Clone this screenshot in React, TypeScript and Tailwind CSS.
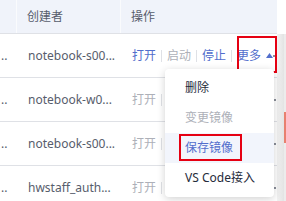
import React from "react";

// rows of the instance table
const rows = [
  { name: "notebook-s00...", active: true },
  { name: "notebook-w0...", active: false },
  { name: "notebook-s00...", active: false },
  { name: "hwstaff_auth...", active: false },
];

const Sep = () => <span className="mx-[5px] inline-block h-[12px] w-px shrink-0 bg-[#dfe1e6]" />;

const Dots = () => (
  <div className="ml-auto mr-[1px] flex shrink-0 gap-px">
    <span className="h-[2px] w-[2px] bg-[#8a8e99]" />
    <span className="h-[2px] w-[2px] bg-[#8a8e99]" />
  </div>
);

function Row({ name, active }: { name: string; active: boolean }) {
  return (
    <div className="flex h-[44px] items-center whitespace-nowrap border-b border-[#dfe1e6]">
      <div className="w-[17px] shrink-0 overflow-hidden pl-[1px] text-[#575d6c]">..</div>
      <div className="w-[104px] shrink-0 pl-[11px] text-[#575d6c]">{name}</div>
      <div className="flex min-w-0 flex-1 items-center pl-[11px]">
        {active ? (
          <>
            <span className="text-[#526ecc]">打开</span>
            <Sep />
            <span className="text-[#adb0b8]">启动</span>
            <Sep />
            <span className="text-[#526ecc]">停止</span>
            <Sep />
            <span className="text-[#526ecc]">更多</span>
            <svg width="7" height="5" viewBox="0 0 7 5" className="ml-[5px] shrink-0">
              <path d="M0 5 L3.5 0 L7 5 Z" fill="#526ecc" />
            </svg>
          </>
        ) : (
          <>
            <span className="text-[#adb0b8]">打开</span>
            <Sep />
          </>
        )}
        <Dots />
      </div>
    </div>
  );
}

export default function App() {
  return (
    <div
      className="relative flex h-[201px] w-[286px] overflow-hidden bg-white text-[12px]"
      style={{ fontFamily: '"Noto Sans", "Noto Sans CJK SC", sans-serif' }}
    >
      <div className="w-[277px] shrink-0">
        <div className="flex h-[34px] items-center border-b border-[#dfe1e6] bg-[#f0f3fa] text-[#575d6c]">
          <div className="h-full w-[17px] border-r border-[#fafbfd]" />
          <div className="flex h-full w-[104px] items-center border-r border-[#fafbfd] pl-[10px]">创建者</div>
          <div className="pl-[10px]">操作</div>
        </div>
        {rows.map((r, i) => (
          <Row key={i} name={r.name} active={r.active} />
        ))}
      </div>
      <div className="flex w-[9px] flex-col">
        <div className="h-[34px] bg-white" />
        <div className="flex flex-1">
          <div className="w-[7px] bg-gradient-to-r from-[#f3f3f3] to-[#e3e3e3]" />
          <div className="flex w-[2px] flex-col bg-[#ececec]">
            <div className="mt-[78px] h-[31px] bg-[#e8806f]" />
          </div>
        </div>
      </div>

      {/* annotation around "更多" */}
      <div className="absolute left-[237px] top-[36px] h-[37px] w-[40px] border-2 border-[#e60012]" />

      {/* dropdown */}
      <div className="absolute left-[165px] top-[69px] w-[109px] rounded-[4px] bg-white py-[4px] shadow-[0_2px_8px_rgba(0,0,0,0.18)]">
        <div className="flex h-[30px] items-center pl-[20px] text-[#252b3a]">删除</div>
        <div className="flex h-[30px] items-center pl-[20px] text-[#adb0b8]">变更镜像</div>
        <div className="relative flex h-[30px] items-center bg-[#f2f5fc] pl-[20px] text-[#526ecc]">
          保存镜像
          <div className="absolute left-[14px] top-[1px] h-[27px] w-[63px] border-2 border-[#e60012]" />
        </div>
        <div className="flex h-[30px] items-center pl-[20px] text-[#252b3a]">VS Code接入</div>
      </div>
    </div>
  );
}
